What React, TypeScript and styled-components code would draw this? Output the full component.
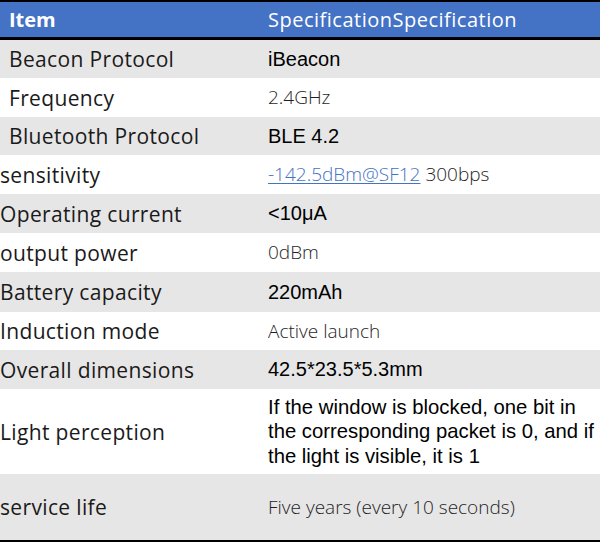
import React from "react";
import styled, { createGlobalStyle } from "styled-components";

const Global = createGlobalStyle`
  html, body { margin: 0; padding: 0; background: #fff; }
  body { width: 600px; overflow: hidden; }
`;

const Table = styled.div`
  width: 600px;
  border-top: 2px solid #000;
  border-bottom: 2px solid #000;
  display: flex;
  flex-direction: column;
`;

const HeaderRow = styled.div`
  display: grid;
  grid-template-columns: 268px 1fr;
  height: 35px;
  background: #4472c4;
  border-bottom: 3px solid #000;
  align-items: center;
  color: #fff;
  font-family: "Open Sans", "Noto Sans", sans-serif;
  font-size: 20px;
`;

const HeadItem = styled.div`
  padding-left: 9px;
  font-weight: 700;
`;

const HeadSpec = styled.div`
  font-weight: 400;
  letter-spacing: 0.5px;
`;

const Row = styled.div<{ $h: number; $alt: boolean }>`
  display: grid;
  grid-template-columns: 268px 1fr;
  height: ${(p) => p.$h}px;
  background: ${(p) => (p.$alt ? "#e7e6e6" : "#ffffff")};
  align-items: center;
`;

const Label = styled.div<{ $indent: boolean }>`
  padding-left: ${(p) => (p.$indent ? 9 : 0)}px;
  font-family: "Open Sans", "Noto Sans", sans-serif;
  font-size: 21px;
  letter-spacing: 0.35px;
  color: #1a1a1a;
  white-space: nowrap;
`;

const Value = styled.div<{ $kind: "arial" | "light"; $size?: number }>`
  font-family: ${(p) =>
    p.$kind === "arial" ? `"Liberation Sans", Arial, sans-serif` : `"Open Sans", "Noto Sans", sans-serif`};
  font-weight: ${(p) => (p.$kind === "arial" ? 400 : 300)};
  font-size: ${(p) => p.$size ?? (p.$kind === "arial" ? 20 : 19)}px;
  color: ${(p) => (p.$kind === "arial" ? "#000" : "#1f1f1f")};
  line-height: 24.5px;
`;

const Link = styled.a`
  color: #4472c4;
  text-decoration: underline;
  text-underline-offset: 2px;
`;

type R = {
  label: string;
  value: React.ReactNode;
  kind: "arial" | "light";
  indent?: boolean;
  h: number;
  size?: number;
};

const rows: R[] = [
  { label: "Beacon Protocol", value: "iBeacon", kind: "arial", indent: true, h: 38 },
  { label: "Frequency", value: "2.4GHz", kind: "light", indent: true, h: 39 },
  { label: "Bluetooth Protocol", value: "BLE 4.2", kind: "arial", indent: true, h: 38 },
  {
    label: "sensitivity",
    value: (
      <>
        <Link href="#">-142.5dBm@SF12</Link> 300bps
      </>
    ),
    kind: "light",
    h: 39,
  },
  { label: "Operating current", value: "<10μA", kind: "arial", h: 39 },
  { label: "output power", value: "0dBm", kind: "light", h: 39 },
  { label: "Battery capacity", value: "220mAh", kind: "arial", h: 40 },
  { label: "Induction mode", value: "Active launch", kind: "light", h: 38 },
  { label: "Overall dimensions", value: "42.5*23.5*5.3mm", kind: "arial", h: 39 },
  {
    label: "Light perception",
    value: "If the window is blocked, one bit in the corresponding packet is 0, and if the light is visible, it is 1",
    kind: "arial",
    h: 85,
    size: 20.3,
  },
  { label: "service life", value: "Five years (every 10 seconds)", kind: "light", h: 66 },
];

export default function App() {
  return (
    <>
      <Global />
      <Table>
        <HeaderRow>
          <HeadItem>Item</HeadItem>
          <HeadSpec>SpecificationSpecification</HeadSpec>
        </HeaderRow>
        {rows.map((r, i) => (
          <Row key={r.label} $h={r.h} $alt={i % 2 === 0}>
            <Label $indent={!!r.indent}>{r.label}</Label>
            <Value $kind={r.kind} $size={r.size}>
              {r.value}
            </Value>
          </Row>
        ))}
      </Table>
    </>
  );
}
